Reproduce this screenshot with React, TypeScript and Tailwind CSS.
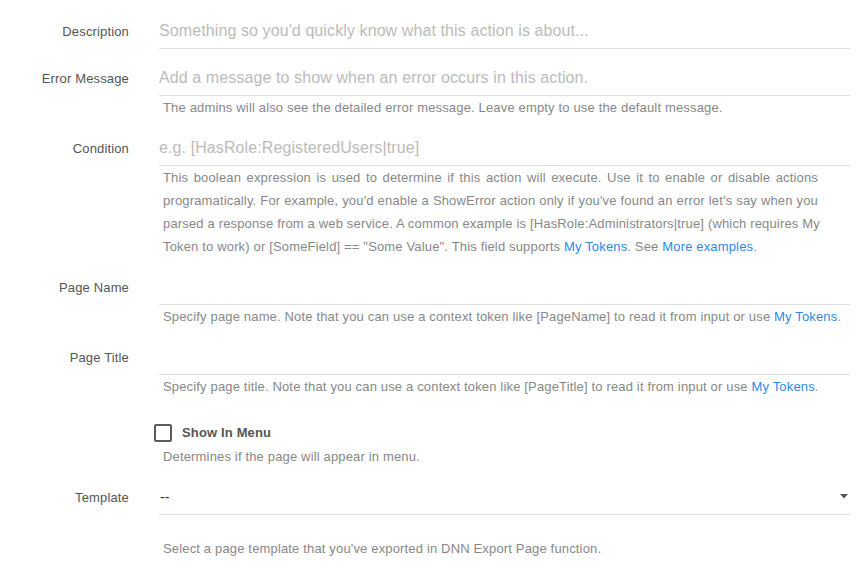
import React from "react";

const font = { fontFamily: '"Liberation Sans", Arial, Helvetica, sans-serif' };

function Label({ children }: { children: React.ReactNode }) {
  return (
    <div className="w-[129px] shrink-0 h-[35px] flex items-center justify-end text-[13px] tracking-[0.15px] text-[#555]">
      {children}
    </div>
  );
}

function Help({ children, className = "" }: { children: React.ReactNode; className?: string }) {
  return (
    <div className={"pl-[4px] text-[13px] leading-[23px] tracking-[0.16px] text-[#888] whitespace-nowrap " + className}>
      {children}
    </div>
  );
}

function Input({ placeholder }: { placeholder?: string }) {
  return (
    <input
      className="block w-full h-[35px] border-b border-[#dedede] bg-transparent text-[16px] tracking-[0.1px] text-[#333] placeholder:text-[#bbb] outline-none p-0"
      placeholder={placeholder}
      style={font}
    />
  );
}

function Row({ label, children }: { label?: string; children: React.ReactNode }) {
  return (
    <div className="flex mb-[12px]">
      <Label>{label}</Label>
      <div className="ml-[30px] flex-1 min-w-0">{children}</div>
    </div>
  );
}

const Link = ({ children }: { children: React.ReactNode }) => (
  <span className="text-[#2b8be5]">{children}</span>
);

const JLine = ({ children }: { children: React.ReactNode }) => (
  <div className="w-[655px] text-justify [text-align-last:justify]">{children}</div>
);

export default function App() {
  return (
    <div className="w-[865px] h-[569px] bg-white pt-[14px] pr-[15px] overflow-hidden" style={font}>
      <Row label="Description">
        <Input placeholder="Something so you'd quickly know what this action is about..." />
      </Row>
      <Row label="Error Message">
        <Input placeholder="Add a message to show when an error occurs in this action." />
        <Help>The admins will also see the detailed error message. Leave empty to use the default message.</Help>
      </Row>
      <Row label="Condition">
        <Input placeholder="e.g. [HasRole:RegisteredUsers|true]" />
        <Help>
          <JLine>This boolean expression is used to determine if this action will execute. Use it to enable or disable actions</JLine>
          <JLine>programatically. For example, you'd enable a ShowError action only if you've found an error let's say when you</JLine>
          <JLine>parsed a response from a web service. A common example is [HasRole:Administrators|true] (which requires My</JLine>
          <div>
            Token to work) or [SomeField] == "Some Value". This field supports <Link>My Tokens</Link>. See{" "}
            <Link>More examples</Link>.
          </div>
        </Help>
      </Row>
      <Row label="Page Name">
        <Input />
        <Help>
          Specify page name. Note that you can use a context token like [PageName] to read it from input or use{" "}
          <Link>My Tokens</Link>.
        </Help>
      </Row>
      <Row label="Page Title">
        <Input />
        <Help>
          Specify page title. Note that you can use a context token like [PageTitle] to read it from input or use{" "}
          <Link>My Tokens</Link>.
        </Help>
      </Row>
      <div className="flex mb-[12px]">
        <div className="w-[129px] shrink-0" />
        <div className="ml-[30px] flex-1 min-w-0">
          <div className="flex items-center pt-[14px] -ml-[5px] h-[32px]">
            <div className="w-[18px] h-[18px] border-2 border-[#5c5c5c] rounded-[2px] shrink-0" />
            <span className="ml-[10px] text-[13px] tracking-[0.15px] font-bold text-[#555]">Show In Menu</span>
          </div>
          <Help className="mt-[3px]">Determines if the page will appear in menu.</Help>
        </div>
      </div>
      <Row label="Template">
        <div className="relative h-[35px] border-b border-[#dedede] flex items-center">
          <span className="pl-[1px] text-[14px] text-[#333]">--</span>
          <svg className="absolute right-[2px] top-[14px]" width="8" height="5" viewBox="0 0 8 5">
            <path d="M0 0 L8 0 L4 4.5 Z" fill="#555" />
          </svg>
        </div>
        <Help className="mt-[22px]">Select a page template that you've exported in DNN Export Page function.</Help>
      </Row>
    </div>
  );
}
